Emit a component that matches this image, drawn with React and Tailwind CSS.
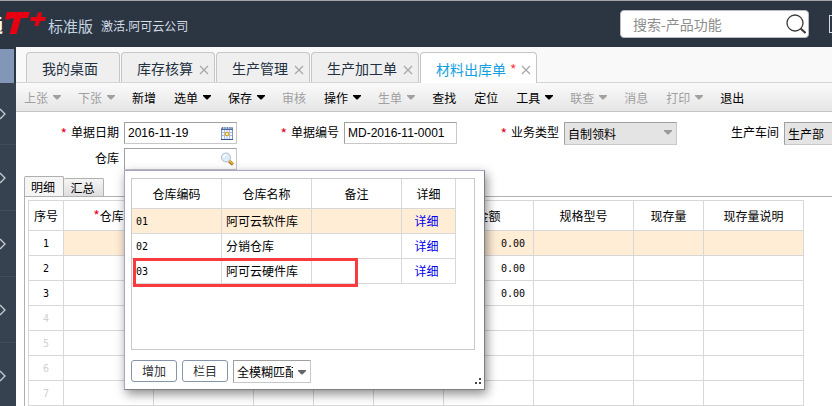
import React from 'react'
import clsx from 'clsx'

const tabs = [
  { title: '我的桌面', width: 'w-[94px]' },
  { title: '库存核算', width: 'w-[94px]', closable: true },
  { title: '生产管理', width: 'w-[94px]', closable: true },
  { title: '生产加工单', width: 'w-[108px]', closable: true },
  { title: '材料出库单', width: 'w-[117px]', closable: true, active: true },
]

const actions = [
  { label: '上张', menu: true, disabled: true },
  { label: '下张', menu: true, disabled: true },
  { label: '新增' },
  { label: '选单', menu: true },
  { label: '保存', menu: true },
  { label: '审核', disabled: true },
  { label: '操作', menu: true },
  { label: '生单', menu: true, disabled: true },
  { label: '查找' },
  { label: '定位' },
  { label: '工具', menu: true },
  { label: '联查', menu: true, disabled: true },
  { label: '消息', disabled: true },
  { label: '打印', menu: true, disabled: true },
  { label: '退出' },
]

const columns = [
  { title: '序号', width: 'w-[35px]' },
  { title: '仓库', width: 'w-[90px]', required: true },
  { title: '', width: 'w-[100px]' },
  { title: '', width: 'w-[60px]' },
  { title: '', width: 'w-[60px]' },
  { title: '', width: 'w-[70px]' },
  { title: '金额', width: 'w-[90px]' },
  { title: '规格型号', width: 'w-[100px]' },
  { title: '现存量', width: 'w-[70px]' },
  { title: '现存量说明', width: 'w-[100px]' },
]

const amounts = ['0.00', '0.00', '0.00', '', '', '', '']

const warehouses = [
  { code: '01', name: '阿可云软件库' },
  { code: '02', name: '分销仓库' },
  { code: '03', name: '阿可云硬件库' },
]

const fieldBorder = 'border border-t-[#a0a0a0] border-l-[#a0a0a0] border-r-[#c8c8c8] border-b-[#c8c8c8]'
const digits = "font-['DejaVu_Sans_Mono',monospace] text-[10px]"

function Caret({ className }) {
  return (
    <svg viewBox="0 0 8 5" className={clsx('w-2 h-[5px] shrink-0', className)} aria-hidden="true">
      <path d="M0 0h8v1L4.500 4.500h-1L0 1z" fill="currentColor" />
    </svg>
  )
}

function Header() {
  return (
    <header className="flex items-center h-[47px] bg-[#2b3642] border-t border-[#a3a5a7] overflow-hidden">
      <div className="flex items-center flex-1 min-w-0">
        <div className="flex justify-end w-[3px] h-5 overflow-hidden text-lg leading-5 font-bold text-white">
          <span>通</span>
        </div>
        <svg viewBox="0 0 44 24" className="w-11 h-6 shrink-0" role="img" aria-label="T+">
          <path d="M4 0H27L25 6H18L13.500 22H6.500L11 6.500H6.500L6 7.500H2Z" fill="#e60012" />
          <path d="M35 0.500H39L38 5H43L42 9H37L35.500 14H31.500L32.500 9H27L28 5H33.500Z" fill="#e60012" />
        </svg>
        <span className="ml-px text-[15px] leading-5 pt-1 text-[#c3d3e0] whitespace-nowrap">标准版</span>
        <span className="ml-2 text-xs leading-5 pt-1 text-[#d5dbe6] whitespace-nowrap">激活.阿可云公司</span>
      </div>
      <label className="flex items-center w-[189px] h-[28px] mr-5 pl-3 pr-[2px] bg-white border border-[#b9bdc2] rounded shrink-0">
        <input
          aria-label="搜索"
          placeholder="搜索-产品功能"
          className="flex-1 min-w-0 h-6 text-sm bg-transparent outline-none placeholder:text-[#8d8d8d]"
        />
        <svg viewBox="0 0 20 20" className="w-5 h-5" fill="none" stroke="#3c3c3c" aria-hidden="true">
          <circle cx="9" cy="9" r="8" strokeWidth="1.300" />
          <path d="M14.500 14.500l5 4.500" strokeWidth="2" />
        </svg>
      </label>
      <div className="w-[3px] h-[18px] border border-r-0 border-[#d5d9dd] shrink-0" />
    </header>
  )
}

function Sidebar() {
  return (
    <nav className="flex flex-col w-4 shrink-0 bg-[#36424f] overflow-hidden" aria-label="导航">
      <div className="h-9 pt-[2px] bg-[#2b3642]">
        <div className="w-[14px] h-full bg-[#8296b7]" />
      </div>
      {[0, 1, 2, 3, 4].map((i) => (
        <button
          key={i}
          aria-label="展开"
          className={clsx('flex items-center border-b border-[#414d5a] shrink-0', i === 0 ? 'h-[62px]' : 'h-[66px]')}
        >
          <svg viewBox="0 0 6 12" className="w-[6px] h-3" fill="none" stroke="#c9ced4" strokeWidth="1.300" aria-hidden="true">
            <path d="M0 1l5 5-5 5" />
          </svg>
        </button>
      ))}
    </nav>
  )
}

function TabBar() {
  return (
    <div className="flex items-start gap-px h-9 pt-[5px] pl-[10px] bg-[#f9f9f9] bg-[linear-gradient(#d5d5d5,#d5d5d5)] bg-[length:100%_1px] bg-bottom bg-no-repeat overflow-hidden">
      {tabs.map((tab) => (
        <div
          key={tab.title}
          className={clsx(
            'flex items-center justify-between pl-[15px] pr-[5px] border border-b-0 border-[#c6c6c6] rounded-t shrink-0',
            tab.width,
            tab.active ? 'h-[31px] bg-white text-[#159fe0]' : 'h-[30px] bg-[#efefef] text-[#22303f]',
          )}
        >
          <button className="text-sm leading-5 pt-px whitespace-nowrap">
            {tab.title}
            {tab.active && <span className="ml-1 text-[#f5413c]">*</span>}
          </button>
          {tab.closable && (
            <button aria-label="关闭" className="pt-1">
              <svg viewBox="0 0 10 10" className="w-[10px] h-[10px]" stroke="#a8a8a8" strokeWidth="1.300" aria-hidden="true">
                <path d="M1 1l8 8M9 1l-8 8" />
              </svg>
            </button>
          )}
        </div>
      ))}
    </div>
  )
}

function Toolbar() {
  return (
    <div className="flex items-center gap-[18px] h-[29px] pt-px pl-2 bg-gradient-to-b from-[#fafafa] to-[#e6e6e6] border-b border-[#c4c4c4] overflow-hidden">
      {actions.map((action) => (
        <button
          key={action.label}
          disabled={action.disabled}
          className={clsx(
            'flex items-center gap-[5px] text-xs shrink-0',
            action.disabled ? 'text-[#a0a0a0]' : 'text-black',
            action.menu && '-mr-px',
          )}
        >
          {action.label}
          {action.menu && <Caret />}
        </button>
      ))}
    </div>
  )
}

function Field({ id, label, required, children }) {
  return (
    <div className="flex h-[23px] gap-[5px]">
      <label htmlFor={id} className="flex justify-end w-[102px] leading-5 whitespace-nowrap">
        {required && <span className="mr-1 pt-px text-sm leading-5 text-[#e60026]">*</span>}
        {label}
      </label>
      <div className="relative w-[113px]">{children}</div>
    </div>
  )
}

function ReadonlySelect({ id, value }) {
  return (
    <>
      <select
        id={id}
        disabled
        className={clsx('w-full h-[23px] pl-[3px] bg-[#e4e4e4] text-black opacity-100 appearance-none', fieldBorder)}
      >
        <option>{value}</option>
      </select>
      <Caret className="absolute right-[5px] top-2 text-[#999]" />
    </>
  )
}

function CalendarIcon() {
  return (
    <svg viewBox="0 0 12 13" className="absolute right-1 top-[5px] w-3 h-[13px]" aria-hidden="true">
      <path d="M0.500 1h11v11.500h-11z" fill="#f4f8ff" stroke="#7f97bf" />
      <path d="M0 2.500h12" stroke="#4c6ba5" />
      <path d="M0 12.500h12" stroke="#33508c" />
      <path d="M1 5.500h10M1 8.500h10M3.500 3v9M6 3v9M8.500 3v9" stroke="#a9bde0" />
      <path d="M1.500 0v2M4 0v2M6.500 0v2M9 0v2M11 0v2" stroke="#5f7cae" />
      <path d="M4.500 5.500h3v3h-3z" fill="#fff3b0" stroke="#e5a314" />
    </svg>
  )
}

function LookupIcon() {
  return (
    <svg viewBox="0 0 14 14" className="absolute right-[3px] top-1 w-[14px] h-[14px]" fill="none" aria-hidden="true">
      <path d="M9 9l4 3.500" stroke="#a87a1d" strokeWidth="3" />
      <path d="M9 8.500l4 3.500" stroke="#f1b83c" strokeWidth="1.500" />
      <circle cx="6" cy="5.500" r="4.500" fill="#dcecf8" stroke="#aebecb" />
      <path d="M3.500 5.500a2.500 2.500 0 0 1 3-2.500" stroke="#fff" strokeWidth="1.500" />
    </svg>
  )
}

function WarehousePicker() {
  const cell = 'border-r border-b border-[#d8d8d8] p-0 pl-1'
  return (
    <div className="absolute left-0 top-[22px] z-10 w-[361px] pt-[7px] pl-[6px] pr-[9px] pb-[6px] bg-white border border-t-[#aaa5c5] border-l-[#aaa5c5] border-r-[#808080] border-b-[#808080] shadow-[2px_4px_10px_rgba(0,0,0,0.45)]">
      <div className="relative h-[172px] border border-[#c9c9c9]">
        <table className="table-fixed w-[324px] border-separate border-spacing-0">
          <thead>
            <tr className="h-[30px]">
              <th className="w-[90px] p-0 font-normal border-r border-b border-[#d8d8d8]">仓库编码</th>
              <th className="w-[90px] p-0 font-normal border-r border-b border-[#d8d8d8]">仓库名称</th>
              <th className="w-[90px] p-0 font-normal border-r border-b border-[#d8d8d8]">备注</th>
              <th className="w-[54px] p-0 font-normal border-r border-b border-[#d8d8d8]">详细</th>
            </tr>
          </thead>
          <tbody>
            {warehouses.map((w, i) => (
              <tr key={w.code} className={clsx('h-[25px]', i === 0 && 'bg-[#ffedd6]')}>
                <td className={clsx(cell, digits, 'pt-px')}>{w.code}</td>
                <td className={cell}>{w.name}</td>
                <td className={cell} />
                <td className="border-r border-b border-[#d8d8d8] p-0 pr-1 text-center">
                  <a href="#detail" className="text-[#0000ee]">详细</a>
                </td>
              </tr>
            ))}
          </tbody>
        </table>
        <div className="absolute left-px top-[79px] w-[225px] h-[29px] border-3 border-[#f93a3e] pointer-events-none" />
      </div>
      <div className="flex items-center gap-[5px] mt-[9px]">
        <button className="w-[46px] h-[22px] border border-[#8795a8] rounded-[3px] text-[#333]">增加</button>
        <button className="w-[46px] h-[22px] border border-[#8795a8] rounded-[3px] text-[#333]">栏目</button>
        <div className="relative w-[78px] mt-px">
          <select
            aria-label="匹配方式"
            className={clsx('block w-full h-[23px] pl-[3px] pr-[17px] bg-white appearance-none', fieldBorder)}
          >
            <option>全模糊匹配</option>
          </select>
          <Caret className="absolute right-[5px] top-[10px] text-[#666]" />
        </div>
      </div>
      <svg viewBox="0 0 6 6" className="absolute right-[3px] bottom-[5px] w-[6px] h-[6px]" fill="#444" aria-hidden="true">
        <path d="M4 0h2v2H4zM0 4h2v2H0zM4 4h2v2H4z" />
      </svg>
    </div>
  )
}

function VoucherForm() {
  const input = "w-full h-[22px] pl-[3px] bg-white outline-none font-['Liberation_Sans',sans-serif]"
  return (
    <form className="grid grid-cols-[repeat(4,220px)] gap-y-[3px] pt-[10px] pl-px">
      <Field id="date" label="单据日期" required>
        <input id="date" defaultValue="2016-11-19" className={clsx(input, fieldBorder)} />
        <CalendarIcon />
      </Field>
      <Field id="number" label="单据编号" required>
        <input id="number" defaultValue="MD-2016-11-0001" className={clsx(input, fieldBorder)} />
      </Field>
      <Field id="type" label="业务类型" required>
        <ReadonlySelect id="type" value="自制领料" />
      </Field>
      <Field id="workshop" label="生产车间">
        <ReadonlySelect id="workshop" value="生产部" />
      </Field>
      <Field id="warehouse" label="仓库">
        <input id="warehouse" className={clsx(input, fieldBorder)} />
        <LookupIcon />
        <WarehousePicker />
      </Field>
    </form>
  )
}

function DetailTable() {
  return (
    <section className="pl-2 pt-[5px]">
      <div className="flex items-end">
        <button className="w-10 h-5 pr-[2px] bg-[#f5f5f5] border border-b-0 border-[#b0b0b0] rounded-t-xs">明细</button>
        <button className="w-10 h-[18px] pr-[2px] bg-gradient-to-b from-[#f5f5f5] to-[#dedede] border border-b-0 border-l-0 border-[#b0b0b0] rounded-t-xs">汇总</button>
      </div>
      <div className="pt-[3px] pl-[3px] border-t border-l border-[#b0b0b0]">
        <table className="table-fixed w-[776px] border-separate border-spacing-0 border-l border-t border-[#d8d8d8]">
          <thead>
            <tr className="h-[30px]">
              {columns.map((col, i) => (
                <th key={i} className={clsx('p-0 font-normal border-r border-b border-[#d8d8d8]', col.width)}>
                  {col.required && <span className="text-sm leading-4 text-[#e60026]">*</span>}
                  {col.title}
                </th>
              ))}
            </tr>
          </thead>
          <tbody>
            {amounts.map((amount, row) => (
              <tr key={row} className="h-[25px]">
                {columns.map((col, i) => (
                  <td
                    key={i}
                    className={clsx(
                      'p-0 pt-px border-r border-b border-[#d8d8d8]',
                      digits,
                      i === 0 && 'text-center',
                      i === 0 && row > 2 && 'text-[#d0d0d0]',
                      i === 6 && 'pr-2 text-right',
                      i > 0 && row === 0 && 'bg-[#ffedd6]',
                    )}
                  >
                    {i === 0 && row + 1}
                    {i === 6 && amount}
                  </td>
                ))}
              </tr>
            ))}
          </tbody>
        </table>
      </div>
    </section>
  )
}

export default function App() {
  return (
    <div className="flex flex-col min-h-screen bg-white overflow-hidden text-xs text-black font-['Noto_Sans_CJK_SC',sans-serif]">
      <Header />
      <div className="flex flex-1">
        <Sidebar />
        <main className="flex-1 min-w-0">
          <TabBar />
          <Toolbar />
          <VoucherForm />
          <DetailTable />
        </main>
      </div>
    </div>
  )
}
